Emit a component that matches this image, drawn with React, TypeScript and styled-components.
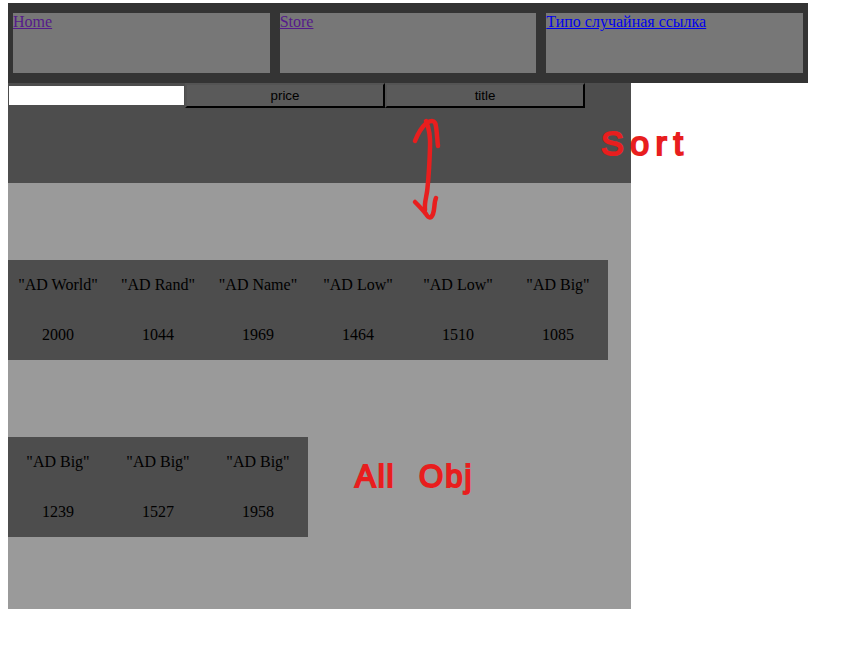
import React from "react";
import styled, { createGlobalStyle } from "styled-components";

const GlobalStyle = createGlobalStyle`
  body {
    margin: 0;
    background: #fff;
    color: #000;
    font: 16px/18px "Liberation Serif", "Times New Roman", serif;
  }
`;

const Page = styled.main`
  position: relative;
  box-sizing: border-box;
  height: 657px;
  padding: 3px 0 0 8px;
`;

const Header = styled.nav`
  box-sizing: border-box;
  display: grid;
  grid-template-columns: repeat(3, 1fr);
  gap: 10px;
  width: 800px;
  height: 80px;
  padding: 10px 5px;
  background: #343434;
`;

const HeaderCell = styled.div`
  background: #777;
`;

const HeaderLink = styled.a<{ $visited?: boolean }>`
  color: ${(p) => (p.$visited ? "#551a8b" : "#0000ee")};
  text-decoration: underline;
`;

const SortBar = styled.div`
  box-sizing: border-box;
  display: flex;
  align-items: flex-start;
  width: 623px;
  height: 100px;
  padding-left: 1px;
  background: #4d4d4d;
`;

const SearchInput = styled.input`
  box-sizing: border-box;
  width: 175px;
  height: 19px;
  margin: 3px 1px 0 0;
  padding: 1px 2px;
  border: 0;
  border-radius: 0;
  background: #fff;
`;

const SortButton = styled.button`
  box-sizing: border-box;
  width: 200px;
  height: 25px;
  margin: 0;
  padding: 0;
  border: 2px outset #000;
  border-radius: 0;
  background: #5a5a5a;
  color: #000;
  font: 13.333px "Liberation Sans", Arial, sans-serif;
`;

const Catalog = styled.section`
  box-sizing: border-box;
  display: flex;
  flex-direction: column;
  align-items: flex-start;
  gap: 77px;
  width: 623px;
  height: 426px;
  padding-top: 77px;
  background: #9a9a9a;
`;

const ItemRow = styled.div`
  display: flex;
`;

const Item = styled.article`
  display: grid;
  grid-template-rows: 50px 50px;
  place-items: center;
  width: 100px;
  height: 100px;
  background: #4d4d4d;
`;

const Arrow = styled.svg`
  position: absolute;
  left: 408px;
  top: 114px;
  fill: none;
  stroke: #e81e1e;
  stroke-width: 4.5;
  stroke-linecap: round;
  stroke-linejoin: round;
`;

const Note = styled.span<{ $x: number; $y: number; $size: number; $spacing: number; $gap: number }>`
  position: absolute;
  left: ${(p) => p.$x}px;
  top: ${(p) => p.$y}px;
  color: #e81e1e;
  font: 400 ${(p) => p.$size}px/36px "Liberation Sans", Arial, sans-serif;
  -webkit-text-stroke: 2px #e81e1e;
  letter-spacing: ${(p) => p.$spacing}px;
  word-spacing: ${(p) => p.$gap}px;
  white-space: nowrap;
`;

const links = [
  { label: "Home", visited: true },
  { label: "Store", visited: true },
  { label: "Типо случайная ссылка", visited: false },
];

const rows = [
  [
    ["AD World", 2000],
    ["AD Rand", 1044],
    ["AD Name", 1969],
    ["AD Low", 1464],
    ["AD Low", 1510],
    ["AD Big", 1085],
  ],
  [
    ["AD Big", 1239],
    ["AD Big", 1527],
    ["AD Big", 1958],
  ],
];

export default function App() {
  return (
    <Page>
      <GlobalStyle />
      <Header>
        {links.map((link) => (
          <HeaderCell key={link.label}>
            <HeaderLink href="#" $visited={link.visited}>{link.label}</HeaderLink>
          </HeaderCell>
        ))}
      </Header>
      <SortBar>
        <SearchInput aria-label="Search" />
        <SortButton>price</SortButton>
        <SortButton>title</SortButton>
      </SortBar>
      <Catalog>
        {rows.map((row, r) => (
          <ItemRow key={r}>
            {row.map(([title, price]) => (
              <Item key={price}>
                <span>{`"${title}"`}</span>
                <span>{price}</span>
              </Item>
            ))}
          </ItemRow>
        ))}
      </Catalog>
      <Arrow width="36" height="110" viewBox="408 114 36 110" aria-hidden="true">
        <path d="M426 121C429 128 430.500 138 430 148C429.500 163 428.500 178 427.500 188C427 196 424 202 425 210" />
        <path d="M415 141C418 133 423 126 427 122.500Q434 119 435.500 124C437 131 437 138 438 146" />
        <path d="M415 202Q422 209 426 214Q430 221 433 214C435 208 434 202 436 198" />
      </Arrow>
      <Note $x={601} $y={125} $size={34} $spacing={6.5} $gap={0}>Sort</Note>
      <Note $x={355} $y={459} $size={31} $spacing={2} $gap={13}>All Obj</Note>
    </Page>
  );
}
